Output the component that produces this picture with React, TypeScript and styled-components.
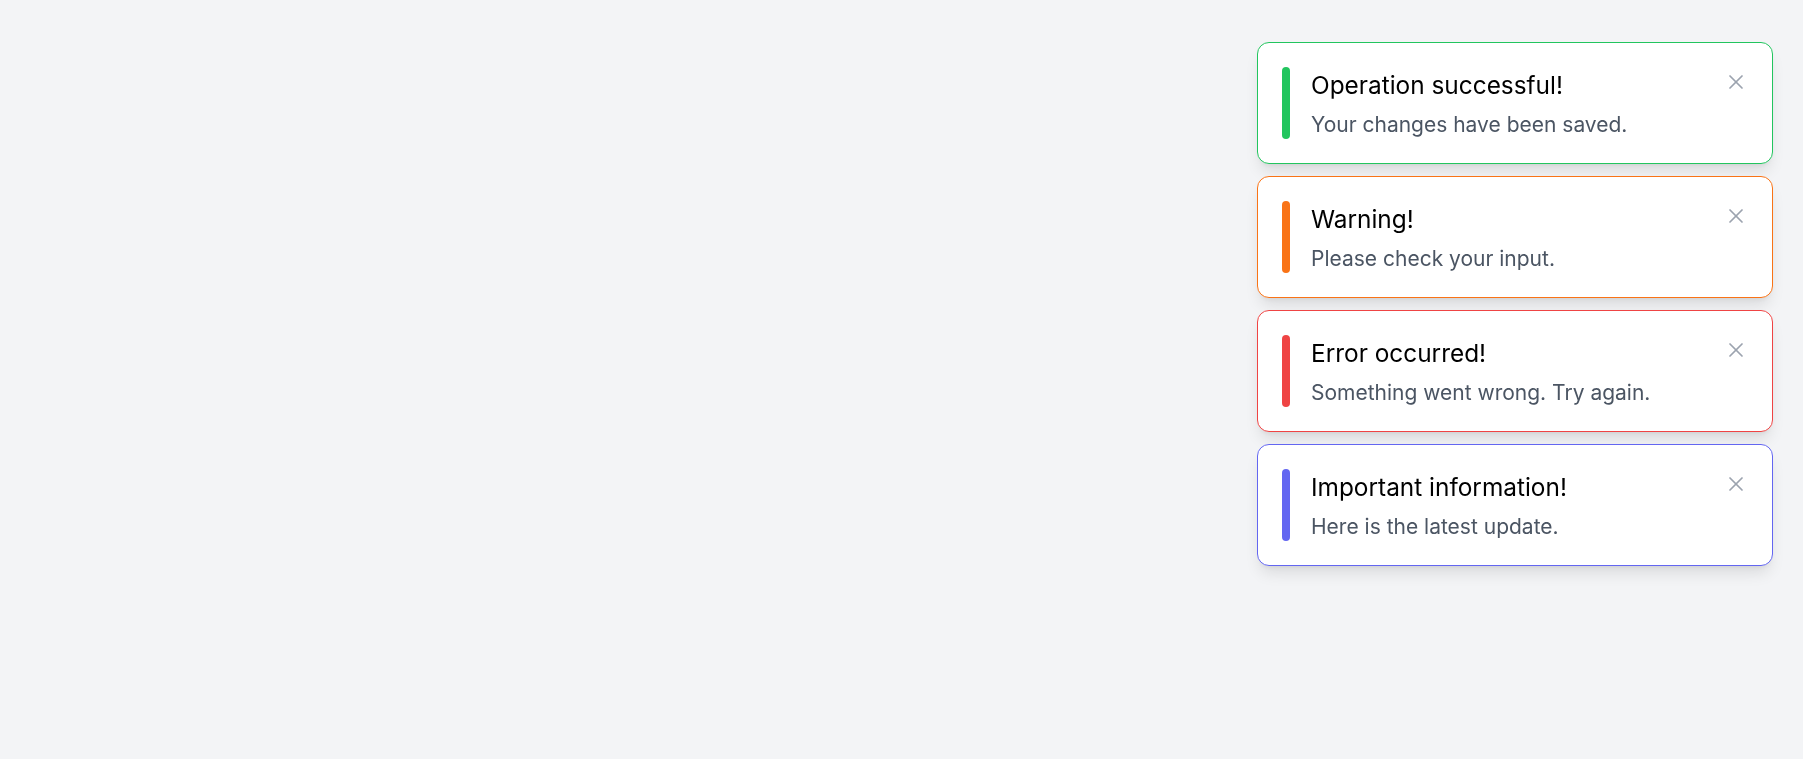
import styled, { createGlobalStyle } from 'styled-components';
import { X } from 'lucide-react';

const GlobalStyle = createGlobalStyle`
  html, body {
    margin: 0;
    padding: 0;
    background: #f3f4f6;
    font-family: Inter, 'Noto Sans', Arial, sans-serif;
  }
  * {
    box-sizing: border-box;
  }
`;

const Page = styled.div`
  min-height: 100vh;
  background: #f3f4f6;
`;

const ToastStack = styled.div`
  position: fixed;
  top: 42px;
  right: 30px;
  width: 516px;
  display: flex;
  flex-direction: column;
  gap: 12px;
`;

const Toast = styled.div<{ $color: string }>`
  display: flex;
  align-items: center;
  padding: 24px;
  background: #ffffff;
  border: 1px solid ${(p) => p.$color};
  border-radius: 12px;
  box-shadow: 0 10px 15px -3px rgba(0, 0, 0, 0.1), 0 4px 6px -4px rgba(0, 0, 0, 0.1);
`;

const Bar = styled.span<{ $color: string }>`
  flex: none;
  width: 8px;
  height: 72px;
  border-radius: 4px;
  background: ${(p) => p.$color};
`;

const Body = styled.div`
  flex: 1;
  margin: 3px 0 0 21px;
  display: flex;
  flex-direction: column;
  gap: 12px;
`;

const Title = styled.span`
  color: #000000;
  font-size: 24.4px;
  line-height: 28px;
  font-weight: 400;
`;

const Message = styled.span`
  color: #4b5563;
  font-size: 21px;
  line-height: 28px;
`;

const CloseButton = styled.button`
  flex: none;
  align-self: flex-start;
  margin-top: 3px;
  width: 24px;
  height: 24px;
  padding: 0;
  border: none;
  background: transparent;
  color: #9ca3af;
  display: flex;
  align-items: center;
  justify-content: center;
  cursor: pointer;
`;

const toasts = [
  { id: 1, color: '#22c55e', title: 'Operation successful!', message: 'Your changes have been saved.' },
  { id: 2, color: '#f97316', title: 'Warning!', message: 'Please check your input.' },
  { id: 3, color: '#ef4444', title: 'Error occurred!', message: 'Something went wrong. Try again.' },
  { id: 4, color: '#6366f1', title: 'Important information!', message: 'Here is the latest update.' },
];

const App = () => {
  return (
    <Page>
      <GlobalStyle />
      <ToastStack>
        {toasts.map((t) => (
          <Toast key={t.id} $color={t.color}>
            <Bar $color={t.color} />
            <Body>
              <Title>{t.title}</Title>
              <Message>{t.message}</Message>
            </Body>
            <CloseButton aria-label='Close'>
              <X size={24} strokeWidth={1.75} />
            </CloseButton>
          </Toast>
        ))}
      </ToastStack>
    </Page>
  );
};

export default App;
